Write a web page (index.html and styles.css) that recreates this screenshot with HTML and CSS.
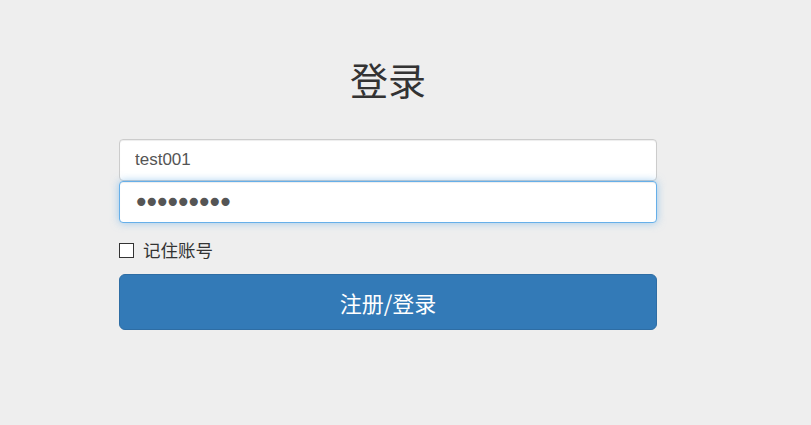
FILE: index.html
```html
<!DOCTYPE html>
<html lang="zh-CN">
<head>
    <meta charset="UTF-8">
    <meta name="viewport" content="width=device-width, initial-scale=1.0">
    <title>登录</title>
    <link rel="stylesheet" href="styles.css">
</head>
<body>
    <form class="form-signin" action="login.php" method="post">
        <h2 class="form-signin-heading">登录</h2>
        <input type="text" class="form-control input-user" name="username" value="test001" required>
        <input type="password" class="form-control input-pass focused" name="password" value="123456789" required>
        <label class="remember">
            <input type="checkbox" name="remember"> 记住账号
        </label>
        <button class="btn-signin" type="submit">注册/登录</button>
    </form>
</body>
</html>
```

FILE: styles.css
```css
body {
    margin: 0;
    padding: 0;
    background-color: #eee;
    color: #333;
    font-family: "Liberation Sans", "Noto Sans CJK SC", sans-serif;
}

.form-signin {
    width: 538px;
    margin: 0 0 0 119px;
    padding-top: 58px;
}

.form-signin-heading {
    height: 42px;
    margin: 0 0 39px;
    text-align: center;
    font-size: 38px;
    font-weight: normal;
    line-height: 42px;
    color: #333;
    font-family: "Noto Sans CJK SC", sans-serif;
}

.form-control {
    display: block;
    width: 100%;
    height: 42px;
    padding: 0 15px;
    box-sizing: border-box;
    font-size: 17px;
    font-family: "Liberation Sans", sans-serif;
    color: #555;
    background-color: #fff;
    border: 1px solid #ccc;
    border-radius: 4px;
    box-shadow: inset 0 1px 1px rgba(0, 0, 0, 0.075);
    outline: none;
}

.input-pass {
    padding-left: 13px;
    font-family: "DejaVu Sans", sans-serif;
    font-size: 28px;
    letter-spacing: -6px;
}

.focused {
    border-color: #66afe9;
    box-shadow: inset 0 1px 1px rgba(0, 0, 0, 0.075), 0 0 8px rgba(102, 175, 233, 0.6);
}

.remember {
    display: flex;
    align-items: center;
    gap: 9px;
    margin: 17px 0 14px;
    font-size: 17.5px;
    font-family: "Noto Sans CJK SC", sans-serif;
    line-height: 20px;
    color: #333;
}

.remember input {
    appearance: none;
    width: 15px;
    height: 15px;
    margin: 0;
    border: 1px solid #333;
    background: #fff;
}

.btn-signin {
    display: block;
    width: 100%;
    height: 56px;
    padding: 0;
    font-size: 22px;
    font-family: "Noto Sans CJK SC", sans-serif;
    color: #fff;
    background-color: #337ab7;
    border: 1px solid #2e6da4;
    border-radius: 6px;
    cursor: pointer;
}
```
